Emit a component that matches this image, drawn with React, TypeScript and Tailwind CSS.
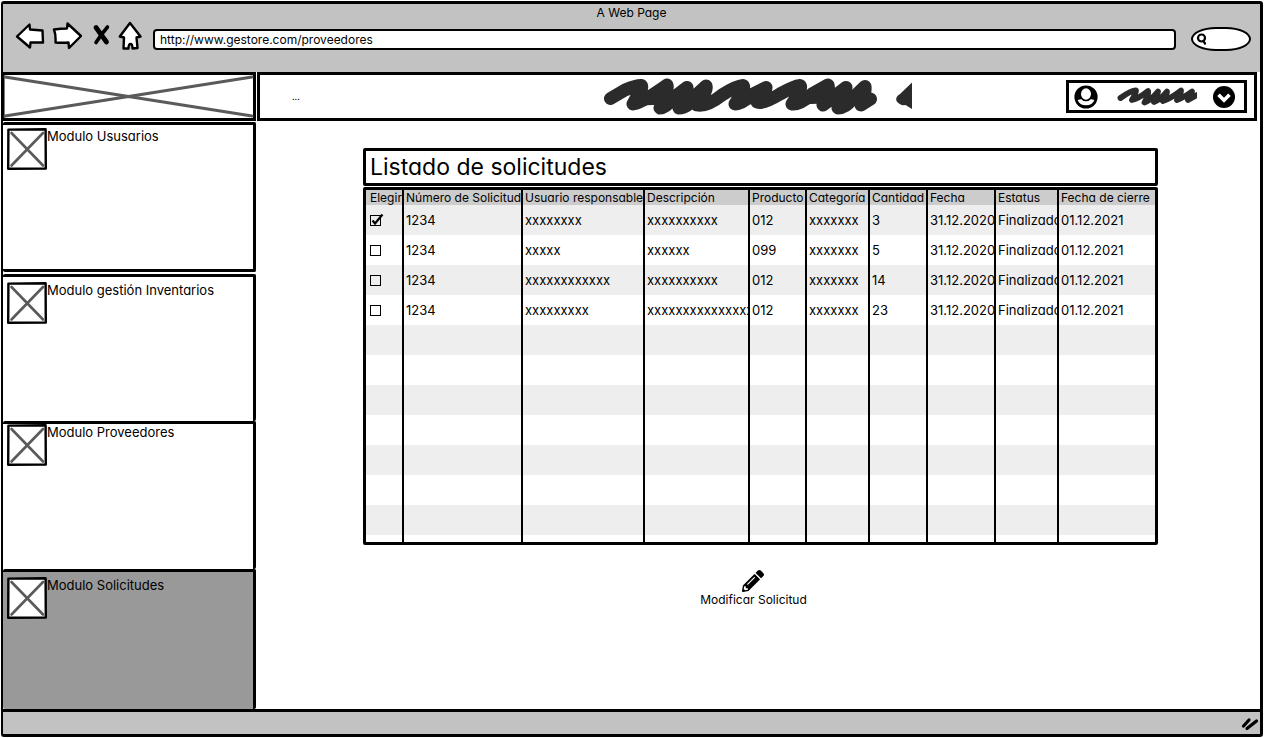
import { FaPencilAlt } from "react-icons/fa";

type Request = {
  id: string;
  user: string;
  description: string;
  product: string;
  category: string;
  amount: string;
  date: string;
  status: string;
  closing: string;
  selected: boolean;
};

const requests: Request[] = [
  { id: "1234", user: "xxxxxxxx", description: "xxxxxxxxxx", product: "012", category: "xxxxxxx", amount: "3", date: "31.12.2020", status: "Finalizado", closing: "01.12.2021", selected: true },
  { id: "1234", user: "xxxxx", description: "xxxxxx", product: "099", category: "xxxxxxx", amount: "5", date: "31.12.2020", status: "Finalizado", closing: "01.12.2021", selected: false },
  { id: "1234", user: "xxxxxxxxxxxx", description: "xxxxxxxxxx", product: "012", category: "xxxxxxx", amount: "14", date: "31.12.2020", status: "Finalizado", closing: "01.12.2021", selected: false },
  { id: "1234", user: "xxxxxxxxx", description: "xxxxxxxxxxxxxxx", product: "012", category: "xxxxxxx", amount: "23", date: "31.12.2020", status: "Finalizado", closing: "01.12.2021", selected: false },
];

const columns = [
  { label: "Elegir", width: "w-[38px]" },
  { label: "Número de Solicitud", width: "w-[119px]" },
  { label: "Usuario responsable", width: "w-[122px]" },
  { label: "Descripción", width: "w-[105px]" },
  { label: "Producto", width: "w-[57px]" },
  { label: "Categoría", width: "w-[63px]" },
  { label: "Cantidad", width: "w-[58px]" },
  { label: "Fecha", width: "w-[68px]" },
  { label: "Estatus", width: "w-[63px]" },
  { label: "Fecha de cierre", width: "" },
];

const modules = [
  { name: "Modulo Ususarios", look: "border-[3px] pt-[3px] mb-[2px] bg-white" },
  { name: "Modulo gestión Inventarios", look: "border-[3px] border-b-0 pt-[5px] bg-white" },
  { name: "Modulo Proveedores", look: "border-[3px] border-b-0 bg-white" },
  { name: "Modulo Solicitudes", look: "border-[3px] border-b-0 pt-[5px] bg-[#999999]" },
];

const cell =
  "overflow-hidden whitespace-nowrap border-r-2 border-black p-0 pl-[2px] text-left font-normal first:pl-1 last:border-r-0";
const textCell = `${cell} pt-[2px]`;

function Thumbnail() {
  return (
    <svg viewBox="0 0 40 42" className="h-[42px] w-10 shrink-0" aria-hidden="true">
      <path d="M1.4 1.6 38.6 1.2 38.8 40.6 1.2 40.8Z" fill="#fff" stroke="#000" strokeWidth="2.4" strokeLinejoin="round" />
      <path d="M4.5 5 36 37.5M36 5 4.5 37.5" stroke="#5a5a5a" strokeWidth="2.6" strokeLinecap="round" />
    </svg>
  );
}

function BrowserBar() {
  return (
    <header className="flex h-[68px] flex-col bg-[#c2c2c2]">
      <p className="text-center text-xs leading-[17px]">A Web Page</p>
      <div className="flex items-center pl-3 pr-[9px]">
        <button aria-label="Atrás" className="mr-[7px]">
          <svg viewBox="0 0 30 30" className="size-[30px]" fill="#fff" stroke="#000" strokeWidth="2.4" strokeLinejoin="round">
            <path d="M2 15.5 14.5 3.5 15 8.5 27.5 9.5 28 21.5 15.5 21.5 15 26.5Z" />
          </svg>
        </button>
        <button aria-label="Adelante" className="mr-[9px]">
          <svg viewBox="0 0 30 30" className="size-[30px]" fill="#fff" stroke="#000" strokeWidth="2.4" strokeLinejoin="round">
            <path d="M2 8.5Q9 7.5 15 7.5L15.5 2.5 29 15 17 27 16.5 21.5Q10 22 3.5 21.5Q4 14 2 8.5Z" />
          </svg>
        </button>
        <button aria-label="Detener" className="mr-[7px]">
          <svg viewBox="0 0 20 30" className="h-[30px] w-5" fill="none" stroke="#000" strokeLinecap="round">
            <path d="M5 6.5Q9 12 15.5 21" strokeWidth="4.8" />
            <path d="M16.5 6Q10.5 13 5 21.5" strokeWidth="3.6" />
          </svg>
        </button>
        <button aria-label="Inicio" className="mr-[11px]">
          <svg viewBox="0 0 24 30" className="h-[30px] w-6" fill="#fff" stroke="#000" strokeWidth="2.4" strokeLinejoin="round">
            <path d="M12 2 22.5 15.5 18.5 16.5 19.5 27 14.5 27.5Q14.5 23 12.5 23Q10.5 23 10.5 27.5L5.5 27.5 6 16.5 1.8 15.5Z" />
          </svg>
        </button>
        <input
          aria-label="Dirección"
          defaultValue="http://www.gestore.com/proveedores"
          className="mr-[15px] mt-[6px] h-[21px] min-w-0 flex-1 rounded-[4px] border-2 border-black bg-white px-[5px] text-xs outline-none"
        />
        <label className="mt-[6px] flex h-6 w-[60px] items-center rounded-[50%/60%] border-2 border-black bg-white pl-[3px]">
          <svg viewBox="0 0 12 12" className="size-3 shrink-0" fill="none" stroke="#000" strokeWidth="2.2" strokeLinecap="round" aria-hidden="true">
            <circle cx="5.5" cy="5" r="3.5" />
            <path d="M7.5 8 9 10.6" />
          </svg>
          <input aria-label="Buscar" className="w-0 min-w-0 flex-1 bg-transparent outline-none" />
        </label>
      </div>
    </header>
  );
}

function TopBar() {
  return (
    <div className="mr-[3px] flex h-[49px] items-center border-[3px] border-black bg-white pl-8 pr-[7px]">
      <span className="w-[311px] text-[9px]">...</span>
      <svg viewBox="603 78 310 38" className="h-[38px] w-[310px] shrink-0" aria-hidden="true">
        <g fill="none" stroke="#2b2b2b" strokeWidth="13" strokeLinecap="round" strokeLinejoin="round">
          <path d="M610.5 98.5 625 90Q637 85 641.5 85.5Q643 88 638 95L633 104Q640 104 667 85Q669 88 660 108Q666 108 672 99L687 87.5Q684 96 679 108Q688 108 694 97L706 86Q708 90 697 105Q707 107 722 95Q736 86 743 85.5Q746 88 735 104Q742 104 753 94L766 87.5Q767 90 757 102Q762 105 780 94Q794 86 800 85.5Q803 88 792 104Q800 105 812 94L828 85Q830 90 823 105L846 87.5Q843 98 838 108Q846 108 852 99L865 86.5Q866 92 861 105L870.5 99" />
          <path d="M640 99 665 98 700 97M738 98 762 96M796 98 825 97 866 98" />
        </g>
        <path d="M912 82.5V109L905.5 105Q900 106 896.5 101Q895 97 900 94Z" fill="#2b2b2b" />
      </svg>
      <button aria-label="Cuenta" className="ml-auto flex h-[33px] w-[181px] items-center border-[3px] border-black pl-[5px] pr-2">
        <svg viewBox="0 0 24 24" className="size-6">
          <circle cx="12" cy="12" r="11.6" />
          <path d="M3.6 15Q8 13.5 12 13.5T20.4 15Q18.5 20.3 12 20.3T3.6 15Z" fill="#fff" />
          <ellipse cx="12" cy="9" rx="5.8" ry="6.5" fill="#fff" stroke="#000" strokeWidth="1.6" />
        </svg>
        <svg viewBox="1117 87 80 20" className="ml-[19px] h-5 w-20">
          <path
            d="M1120.5 98Q1132 90 1136 90.5Q1136 93 1132 100Q1138 99 1148 91Q1149 94 1144.5 102.5Q1150 101 1158 91.5Q1157 96 1154 102Q1160 100 1167 91.5Q1167 95 1163 101Q1170 99 1181 90.5Q1181 94 1177 100Q1183 98 1192 91.5Q1192 95 1188 100L1197 95M1148 98H1166"
            fill="none"
            stroke="#2b2b2b"
            strokeWidth="5.8"
            strokeLinecap="round"
            strokeLinejoin="round"
          />
        </svg>
        <svg viewBox="0 0 24 24" className="ml-auto size-6">
          <circle cx="12" cy="12" r="11" />
          <path d="M6.5 9.8 12 15.3 17.5 9.8" fill="none" stroke="#fff" strokeWidth="3.6" />
        </svg>
      </button>
    </div>
  );
}

function Sidebar() {
  return (
    <aside className="mr-px flex w-[253px] shrink-0 flex-col">
      <svg viewBox="0 0 253 50" preserveAspectRatio="none" className="h-[50px] w-full" aria-hidden="true">
        <rect x="0" y="1.5" width="251.5" height="46" fill="#fff" stroke="#000" strokeWidth="3" />
        <path d="M2 5 249 44M249 5 2 44" stroke="#5a5a5a" strokeWidth="3" strokeLinecap="round" />
      </svg>
      <nav className="grid flex-1 grid-rows-[152fr_148fr_148fr_140fr]">
        {modules.map((m) => (
          <a key={m.name} href="#" className={`flex items-start rounded-[2px] border-l-0 border-black pl-1 ${m.look}`}>
            <Thumbnail />
            <span className="leading-4">{m.name}</span>
          </a>
        ))}
      </nav>
    </aside>
  );
}

function RequestTable() {
  return (
    <div className="mt-px flex h-[358px] flex-col overflow-hidden rounded-[2px] border-[3px] border-black">
      <table className="h-full w-full table-fixed border-separate border-spacing-0">
        <thead>
          <tr className="h-[15px] bg-[#cccccc] text-xs">
            {columns.map((c) => (
              <th key={c.label} scope="col" className={`${cell} ${c.width} leading-[15px]`}>
                {c.label}
              </th>
            ))}
          </tr>
        </thead>
        <tbody>
          {requests.map((r, i) => (
            <tr key={i} className="h-[30px] odd:bg-[#eeeeee]">
              <td className={cell}>
                <label className="grid w-4 items-center">
                  <input
                    type="checkbox"
                    aria-label={`Elegir solicitud ${i + 1}`}
                    defaultChecked={r.selected}
                    className="peer col-start-1 row-start-1 size-[11px] appearance-none border border-black"
                  />
                  <svg viewBox="0 0 16 14" className="pointer-events-none col-start-1 row-start-1 hidden h-[14px] w-4 peer-checked:block" fill="none" stroke="#000" strokeWidth="2.2" aria-hidden="true">
                    <path d="M2.5 7.5 5 10.5 12.5 1.5" />
                  </svg>
                </label>
              </td>
              <td className={textCell}>{r.id}</td>
              <td className={textCell}>{r.user}</td>
              <td className={textCell}>{r.description}</td>
              <td className={textCell}>{r.product}</td>
              <td className={textCell}>{r.category}</td>
              <td className={textCell}>{r.amount}</td>
              <td className={textCell}>{r.date}</td>
              <td className={textCell}>{r.status}</td>
              <td className={textCell}>{r.closing}</td>
            </tr>
          ))}
          {[0, 1, 2, 3, 4, 5, 6].map((n) => (
            <tr key={n} className="h-[30px] odd:bg-[#eeeeee]">
              {columns.map((c) => (
                <td key={c.label} className={cell} />
              ))}
            </tr>
          ))}
          <tr>
            {columns.map((c) => (
              <td key={c.label} className={cell} />
            ))}
          </tr>
        </tbody>
      </table>
    </div>
  );
}

export default function App() {
  return (
    <div className="flex min-h-screen flex-col bg-white p-px font-[Inter,sans-serif] text-[13px] text-black [font-feature-settings:'cv11']">
      <div className="flex flex-1 flex-col rounded-[3px] border-[3px] border-l-2 border-black">
        <BrowserBar />
        <div className="flex flex-1">
          <Sidebar />
          <main className="flex min-w-0 flex-1 flex-col">
            <TopBar />
            <section className="flex flex-1 flex-col pl-[106px] pr-[102px] pt-[27px]">
              <h1 className="rounded-[2px] border-[3px] border-black pl-1 text-[23px] leading-8">Listado de solicitudes</h1>
              <RequestTable />
              <button className="mr-[14px] mt-[25px] flex flex-col items-center self-center text-xs">
                <FaPencilAlt className="size-[22px]" />
                <span className="leading-4">Modificar Solicitud</span>
              </button>
            </section>
          </main>
        </div>
        <footer className="flex h-[25px] items-center justify-end border-t-[3px] border-black bg-[#c2c2c2] pr-px">
          <svg viewBox="0 0 18 16" className="h-4 w-[18px]" fill="none" stroke="#000" strokeWidth="3.2" strokeLinecap="round" aria-hidden="true">
            <path d="M2.5 11 8 5M6 13.5 15.5 6" />
          </svg>
        </footer>
      </div>
    </div>
  );
}
